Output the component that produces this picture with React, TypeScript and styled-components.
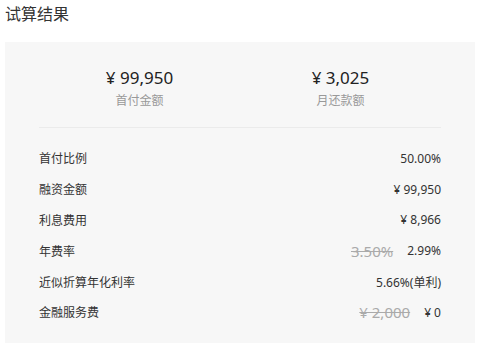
import React from "react";
import styled, { createGlobalStyle } from "styled-components";

const GlobalStyle = createGlobalStyle`
  body {
    margin: 0;
    background: #fff;
    font-family: "Noto Sans", "Noto Sans CJK SC", sans-serif;
    color: #333;
  }
`;

const Page = styled.div`
  padding: 0 5px;
`;

const Title = styled.h3`
  margin: 0;
  height: 42px;
  line-height: 29px;
  font-size: 16px;
  font-weight: normal;
  color: #333;
`;

const Panel = styled.div`
  background: #f7f7f7;
  padding: 0 34px 15px;
`;

const Summary = styled.div`
  display: grid;
  grid-template-columns: 1fr 1fr;
  padding: 24px 0 17px;
  border-bottom: 1px solid #ebebeb;
`;

const SummaryItem = styled.div`
  display: flex;
  flex-direction: column;
  align-items: center;
`;

const Amount = styled.div`
  font-size: 17px;
  line-height: 24px;
  color: #222;
`;

const Caption = styled.div`
  margin-top: 2px;
  font-size: 12px;
  line-height: 18px;
  color: #999;
`;

const List = styled.div`
  padding-top: 15px;
`;

const Row = styled.div`
  display: flex;
  justify-content: space-between;
  align-items: center;
  height: 30.8px;
  font-size: 12px;
  color: #333;
`;

const Values = styled.div`
  display: flex;
  align-items: center;
  gap: 14px;
`;

const Struck = styled.del`
  font-size: 15px;
  color: #aaa;
`;

type Item = { label: string; value: string; was?: string };

const items: Item[] = [
  { label: "首付比例", value: "50.00%" },
  { label: "融资金额", value: "¥ 99,950" },
  { label: "利息费用", value: "¥ 8,966" },
  { label: "年费率", value: "2.99%", was: "3.50%" },
  { label: "近似折算年化利率", value: "5.66%(单利)" },
  { label: "金融服务费", value: "¥ 0", was: "¥ 2,000" },
];

export default function App() {
  return (
    <Page>
      <GlobalStyle />
      <Title>试算结果</Title>
      <Panel>
        <Summary>
          <SummaryItem>
            <Amount>¥ 99,950</Amount>
            <Caption>首付金额</Caption>
          </SummaryItem>
          <SummaryItem>
            <Amount>¥ 3,025</Amount>
            <Caption>月还款额</Caption>
          </SummaryItem>
        </Summary>
        <List>
          {items.map((it) => (
            <Row key={it.label}>
              <span>{it.label}</span>
              <Values>
                {it.was && <Struck>{it.was}</Struck>}
                <span>{it.value}</span>
              </Values>
            </Row>
          ))}
        </List>
      </Panel>
    </Page>
  );
}
